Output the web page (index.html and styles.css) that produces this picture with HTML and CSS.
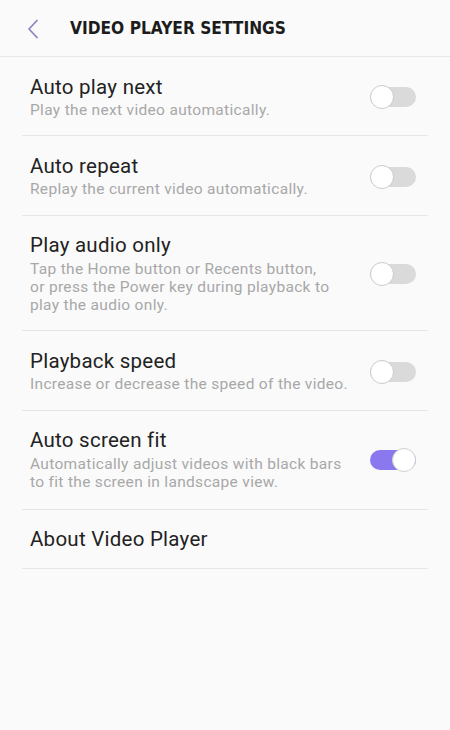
FILE: index.html
```html
<!DOCTYPE html>
<html>
<head>
<meta charset="utf-8">
<link rel="stylesheet" href="styles.css">
</head>
<body>
<div class="screen">
  <header class="header">
    <svg class="back" width="12" height="20" viewBox="0 0 12 20"><path d="M10 1.5 L2 10 L10 18.5" fill="none" stroke="#8d86c4" stroke-width="1.8" stroke-linecap="round" stroke-linejoin="round"/></svg>
    <h1 class="title">VIDEO PLAYER SETTINGS</h1>
  </header>
  <ul class="list">
    <li class="item">
      <div class="text"><div class="name">Auto play next</div><div class="desc">Play the next video automatically.</div></div>
      <span class="switch"><span class="knob"></span></span>
    </li>
    <li class="item">
      <div class="text"><div class="name">Auto repeat</div><div class="desc">Replay the current video automatically.</div></div>
      <span class="switch"><span class="knob"></span></span>
    </li>
    <li class="item">
      <div class="text"><div class="name">Play audio only</div><div class="desc">Tap the Home button or Recents button,<br>or press the Power key during playback to<br>play the audio only.</div></div>
      <span class="switch"><span class="knob"></span></span>
    </li>
    <li class="item">
      <div class="text"><div class="name">Playback speed</div><div class="desc">Increase or decrease the speed of the video.</div></div>
      <span class="switch"><span class="knob"></span></span>
    </li>
    <li class="item two">
      <div class="text"><div class="name">Auto screen fit</div><div class="desc">Automatically adjust videos with black bars<br>to fit the screen in landscape view.</div></div>
      <span class="switch on"><span class="knob"></span></span>
    </li>
    <li class="item last">
      <div class="text"><div class="name">About Video Player</div></div>
    </li>
  </ul>
</div>
</body>
</html>
```
FILE: styles.css
```css
* { box-sizing: border-box; }
html, body { margin: 0; padding: 0; }
body {
  background: #fafafa;
  font-family: Roboto, "Open Sans", sans-serif;
  width: 450px;
  height: 730px;
  overflow: hidden;
}
.screen { width: 450px; }
.header {
  height: 57px;
  display: flex;
  align-items: center;
  border-bottom: 1px solid #e8e8e8;
  padding-left: 27px;
}
.back { display: block; margin-top: 1px; }
.title {
  margin: 0 0 0 31px;
  font-family: "DejaVu Sans", sans-serif;
  font-stretch: condensed;
  font-weight: 700;
  font-size: 17.2px;
  color: #1c1c1c;
}
.list { list-style: none; margin: 0; padding: 0 22px; }
.item {
  display: flex;
  align-items: center;
  justify-content: space-between;
  padding: 18.5px 12px 16px 8px;
  border-bottom: 1px solid #e6e6e6;
}
.item.two { padding-bottom: 17.5px; }
.item.last { padding-bottom: 16.5px; }
.name {
  font-size: 20.5px;
  line-height: 23px;
  letter-spacing: 0.25px;
  color: #222;
}
.desc {
  font-size: 15.5px;
  line-height: 18.3px;
  letter-spacing: 0.32px;
  color: #a8a8a8;
  margin-top: 2.5px;
}
.switch {
  position: relative;
  width: 46px;
  height: 20px;
  border-radius: 10px;
  background: #dadada;
  flex: none;
}
.knob {
  position: absolute;
  left: 0;
  top: -2px;
  width: 24px;
  height: 24px;
  border-radius: 50%;
  background: #fff;
  border: 1.5px solid #cbcbcb;
}
.switch.on { background: #8a79ee; }
.switch.on .knob { left: 22px; border-color: #d0d0d0; }
```
